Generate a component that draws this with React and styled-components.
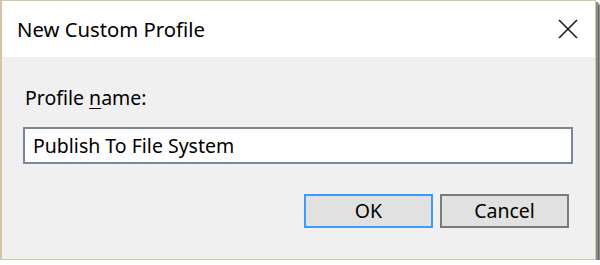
import React from 'react'
import styled, { createGlobalStyle } from 'styled-components'

const GlobalStyle = createGlobalStyle`
  html, body {
    margin: 0;
    padding: 0;
    background: #ffffff;
  }
  body {
    font-family: "Noto Sans", "Open Sans", sans-serif;
  }
`

const Frame = styled.div`
  box-sizing: border-box;
  width: 596px;
  height: 260px;
  border: 1px solid #d3c6a6;
  border-left-width: 2px;
  box-shadow: 2px 2px 0 #8a8a8a, 4px 4px 2px #5a5a5a;
  display: flex;
  flex-direction: column;
  background: #f0f0f0;
`

const TitleBar = styled.div`
  height: 56px;
  flex: none;
  background: #ffffff;
  display: flex;
  align-items: center;
  justify-content: space-between;
  padding: 0 16px 0 15px;
`

const Title = styled.span`
  font-size: 20.3px;
  color: #000;
  margin-top: -1px;
`

const CloseButton = styled.button`
  width: 22px;
  height: 22px;
  padding: 0;
  border: none;
  background: none;
  display: flex;
  align-items: center;
  justify-content: center;
`

const Body = styled.div`
  flex: 1;
  display: flex;
  flex-direction: column;
  padding: 29px 21px 0 21px;
`

const Label = styled.label`
  font-size: 19.5px;
  line-height: 24px;
  color: #000;
  margin-left: 2px;
  margin-bottom: 17px;
`

const Mnemonic = styled.span`
  text-decoration: underline;
  text-decoration-thickness: 1px;
  text-underline-offset: 3px;
`

const TextBox = styled.div`
  box-sizing: border-box;
  height: 37px;
  width: 550px;
  border: 2px solid #7a8799;
  background: #fff;
  display: flex;
  align-items: center;
  padding-left: 8px;
  font-size: 19.5px;
  color: #000;
`

const ButtonRow = styled.div`
  display: flex;
  justify-content: flex-end;
  gap: 7px;
  margin-top: 30px;
  padding-right: 5px;
`

const Button = styled.button`
  box-sizing: border-box;
  width: 129px;
  height: 34px;
  background: #e1e1e1;
  border: 2px solid ${p => (p.$primary ? '#3d9bff' : '#7a7a7a')};
  font-family: inherit;
  font-size: 19.5px;
  line-height: 1;
  color: #000;
  padding: 0;
`

const App = () => {
  return (
    <>
      <GlobalStyle />
      <Frame>
        <TitleBar>
          <Title>New Custom Profile</Title>
          <CloseButton aria-label="Close">
            <svg width="20" height="20" viewBox="0 0 20 20">
              <path d="M1 1 L19 19 M19 1 L1 19" stroke="#1a1a1a" strokeWidth="1.6" fill="none" />
            </svg>
          </CloseButton>
        </TitleBar>
        <Body>
          <Label>Profile <Mnemonic>n</Mnemonic>ame:</Label>
          <TextBox>Publish To File System</TextBox>
          <ButtonRow>
            <Button $primary>OK</Button>
            <Button>Cancel</Button>
          </ButtonRow>
        </Body>
      </Frame>
    </>
  )
}

export default App
